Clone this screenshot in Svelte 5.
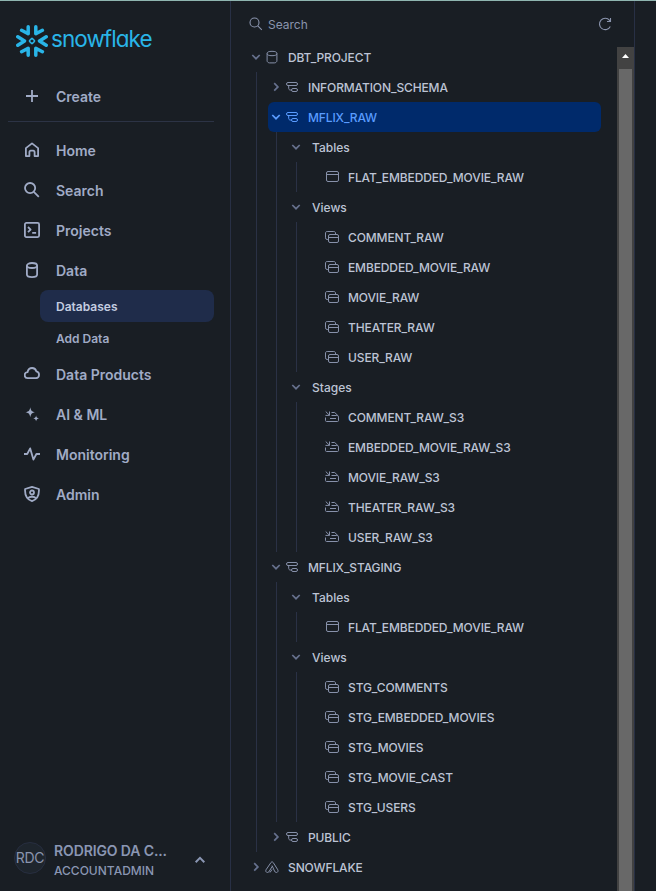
<script>
  const nav = [
    { label: 'Home', icon: 'home' },
    { label: 'Search', icon: 'search' },
    { label: 'Projects', icon: 'projects' },
    {
      label: 'Data',
      icon: 'data',
      children: [{ label: 'Databases', active: true }, { label: 'Add Data' }]
    },
    { label: 'Data Products', icon: 'cloud' },
    { label: 'AI & ML', icon: 'sparkle' },
    { label: 'Monitoring', icon: 'pulse' },
    { label: 'Admin', icon: 'shield' }
  ];

  const leaves = (icon, names) => names.map((label) => ({ label, icon, leaf: true }));

  const tree = [
    {
      label: 'DBT_PROJECT',
      icon: 'database',
      children: [
        { label: 'INFORMATION_SCHEMA', icon: 'schema' },
        {
          label: 'MFLIX_RAW',
          icon: 'schema',
          selected: true,
          children: [
            { label: 'Tables', children: leaves('table', ['FLAT_EMBEDDED_MOVIE_RAW']) },
            {
              label: 'Views',
              children: leaves('view', ['COMMENT_RAW', 'EMBEDDED_MOVIE_RAW', 'MOVIE_RAW', 'THEATER_RAW', 'USER_RAW'])
            },
            {
              label: 'Stages',
              children: leaves('stage', [
                'COMMENT_RAW_S3',
                'EMBEDDED_MOVIE_RAW_S3',
                'MOVIE_RAW_S3',
                'THEATER_RAW_S3',
                'USER_RAW_S3'
              ])
            }
          ]
        },
        {
          label: 'MFLIX_STAGING',
          icon: 'schema',
          children: [
            { label: 'Tables', children: leaves('table', ['FLAT_EMBEDDED_MOVIE_RAW']) },
            {
              label: 'Views',
              children: leaves('view', ['STG_COMMENTS', 'STG_EMBEDDED_MOVIES', 'STG_MOVIES', 'STG_MOVIE_CAST', 'STG_USERS'])
            }
          ]
        },
        { label: 'PUBLIC', icon: 'schema' }
      ]
    },
    { label: 'SNOWFLAKE', icon: 'app' }
  ];
</script>

{#snippet navIcon(name)}
  <svg class="nav-icon" viewBox="0 0 16 16">
    {#if name === 'plus'}
      <path d="M8 2v12M2 8h12" />
    {:else if name === 'home'}
      <path d="M1.9 6.1 8 1.4l6.1 4.7V14.1H10.6V10a1.3 1.3 0 0 0-1.3-1.3H6.7A1.3 1.3 0 0 0 5.4 10v4.1H1.9z" />
    {:else if name === 'search'}
      <circle cx="6.1" cy="6.1" r="5.1" /><path d="m9.8 9.8 5 5" />
    {:else if name === 'projects'}
      <rect x=".9" y=".9" width="14.2" height="14.2" rx="1.5" />
      <path d="m4 5 2.6 2.6L4 10.2M8.2 10.8h3.9" />
    {:else if name === 'data'}
      <ellipse cx="8" cy="3.5" rx="5.1" ry="2.5" />
      <path d="M2.9 3.5v9c0 1.6 1.7 2.6 5.1 2.6s5.1-1 5.1-2.6v-9" />
    {:else if name === 'cloud'}
      <path d="M3.9 12.2a3 3 0 0 1-.4-6C4 3.8 5.7 2 8.1 2c2.2 0 3.7 1.4 4.2 3.4a3.45 3.45 0 0 1-.3 6.8z" />
    {:else if name === 'sparkle'}
      <g transform="translate(0 1.2)">
        <path class="solid" d="M6.3 0c.7 3.4 1.2 4.2 4.7 5-3.5.8-4 1.6-4.7 5-.7-3.4-1.2-4.2-4.8-5 3.6-.8 4.1-1.6 4.800-5zM12.100 8.300c.4 2 .9 2.400 2.900 2.900-2 .4-2.500.9-2.900 2.900-.4-2-.9-2.500-2.900-2.900 2-.5 2.500-.9 2.900-2.900z" />
      </g>
    {:else if name === 'pulse'}
      <path d="M0 8h3.200L6.200 2.400l3.200 11.200L12.400 8H16" />
    {:else if name === 'shield'}
      <path d="M8 .9 14.900 3c.4 5.900-1.300 10.300-6.900 12.100C2.400 13.300.7 8.900 1.100 3z" />
      <circle cx="8" cy="6.500" r="2" />
      <path d="M3.900 12.400c1.700-2.200 6.500-2.200 8.200 0" />
    {/if}
  </svg>
{/snippet}

{#snippet treeIcon(name)}
  <svg class="tree-icon" viewBox="0 0 16 16">
    {#if name === 'database'}
      <ellipse cx="8" cy="4.5" rx="4.9" ry="2.2" />
      <path d="M3.1 4.5v7.3c0 1.1 1.2 2.1 2.5 2.1h4.800c1.300 0 2.500-1 2.500-2.100V4.500" />
    {:else if name === 'schema'}
      <rect x="2.500" y="3.500" width="11" height="3" rx="1.500" />
      <path d="M4.700 6.500v2.900c0 .9.600 1.600 1.500 1.600h1.300" />
      <rect x="7.500" y="9.500" width="6" height="3" rx="1.500" />
    {:else if name === 'table'}
      <rect x="2.500" y="2.500" width="12" height="10" rx="1.500" /><path d="M2.500 5.500h12" />
    {:else if name === 'view'}
      <rect x="4.500" y="5.500" width="10" height="8" rx="1.500" /><path d="M4.500 8.500h10" />
      <path d="M4.500 10.500H3.200a1.700 1.700 0 0 1-1.700-1.700V4c0-1 .7-1.500 1.700-1.500h6.600c.9 0 1.700.6 1.700 1.500v1.500" />
    {:else if name === 'stage'}
      <path d="m1.700 2.500 3.600 3.600M5.500 2.500v3.900H1.500" />
      <path d="M7.500 3.500h3.200l3.800 3.700M7.500 6.500h5.300c1 0 1.700.7 1.700 1.600v3.400c0 .6-.4 1-1 1h-11c-.6 0-1-.4-1-1V8.500M6 9.500h6" />
    {:else if name === 'app'}
      <path d="M7 3.500 2 10.800c-.6 1.200 0 2.700 1.500 2.700 1 0 1.600-.7 1.900-1.500L8.500 7M7 3.500c.5-.8 1.700-.8 2.200 0l4.600 7.300c.6 1.200 0 2.700-1.400 2.700-1 0-1.600-.7-1.900-1.500L8 6.500M8 10.500l-2 3" />
    {/if}
  </svg>
{/snippet}

{#snippet node(item)}
  <div class="row" class:selected={item.selected}>
    {#if !item.leaf}
      <svg class="chevron" viewBox="0 0 16 16">
        <path d={item.children ? 'm4.3 6 3.7 3.7L11.7 6' : 'm6.2 4.2 3.7 3.7-3.7 3.7'} />
      </svg>
    {:else}
      <span class="spacer"></span>
    {/if}
    {#if item.icon}{@render treeIcon(item.icon)}{/if}
    <span class="label" class:object={item.icon}>{item.label}</span>
  </div>
  {#if item.children}
    <div class="branch">
      {#each item.children as child}{@render node(child)}{/each}
    </div>
  {/if}
{/snippet}

<div class="app">
  <aside>
    <div class="brand">
      <svg class="mark" viewBox="0 0 32 32">
        <path d="M12.200 1.800v7L5.600 5.300M19.800 1.800v7l6.600-3.500M12.200 30.200v-7l-6.600 3.500M19.800 30.200v-7l6.600 3.500M1.800 11.800 8.500 16l-6.700 4.200M30.200 11.800 23.500 16l6.700 4.200" />
        <rect class="core" x="14" y="14" width="4" height="4" rx=".6" transform="rotate(45 16 16)" />
      </svg>
      <span class="wordmark">snowflake</span>
    </div>

    <div class="item create">{@render navIcon('plus')}<span>Create</span></div>
    <hr />
    <nav>
      {#each nav as entry}
        <div class="item">{@render navIcon(entry.icon)}<span>{entry.label}</span></div>
        {#if entry.children}
          <div class="subnav">
            {#each entry.children as sub}
              <div class="sub" class:active={sub.active}>{sub.label}</div>
            {/each}
          </div>
        {/if}
      {/each}
    </nav>

    <div class="user">
      <div class="avatar">RDC</div>
      <div class="who">
        <div class="name">RODRIGO DA C...</div>
        <div class="role">ACCOUNTADMIN</div>
      </div>
      <svg class="caret" viewBox="0 0 16 16"><path d="m3.700 10.200 4.300-4.300 4.300 4.300" /></svg>
    </div>
  </aside>

  <main>
    <header>
      <svg class="find" viewBox="0 0 14 14"><circle cx="5.500" cy="5.500" r="4.500" /><path d="m8.800 8.800 4 4" /></svg>
      <span>Search</span>
      <svg class="refresh" viewBox="0 0 14 14">
        <path d="M12.300 9.500A5.700 5.700 0 1 1 11.600 3.300L12.500 4.300M12.500 1v3.500H9" />
      </svg>
    </header>
    <div class="scroller">
      <div class="tree">
        {#each tree as item}{@render node(item)}{/each}
      </div>
      <div class="scrollbar">
        <div class="up"></div>
        <div class="thumb"></div>
      </div>
    </div>
  </main>
</div>

<style>
  :global(body) {
    background: #191e24;
  }
  .app {
    box-sizing: border-box;
    width: 656px;
    height: 891px;
    display: flex;
    overflow: hidden;
    background: #191e24;
    border-top: 1px solid #8fb5b0;
    font-family: Inter, 'Liberation Sans', sans-serif;
    color: #bdc4d5;
  }
  svg {
    flex: none;
    fill: none;
    stroke: currentColor;
  }
  aside {
    width: 230px;
    display: flex;
    flex-direction: column;
    color: #a0abc6;
  }
  .brand {
    display: flex;
    align-items: center;
    height: 32px;
    margin: 24px 0 0 16px;
    color: #29b5e8;
  }
  .mark {
    width: 32px;
    height: 32px;
    stroke-width: 3.5;
    stroke-linecap: round;
    stroke-linejoin: round;
  }
  .mark .core {
    stroke-width: 1.5;
  }
  .wordmark {
    margin: -4px 0 0 3px;
    font-size: 22.5px;
    line-height: 30px;
    font-weight: 400;
    letter-spacing: -0.95px;
    font-feature-settings: 'cv11';
  }
  .item {
    display: flex;
    align-items: center;
    height: 40px;
    padding-left: 24px;
    gap: 16px;
    font-size: 14px;
    font-weight: 600;
  }
  .item span {
    padding-top: 2px;
    line-height: 20px;
  }
  .create {
    margin-top: 19px;
  }
  .nav-icon {
    width: 16px;
    height: 16px;
    stroke-width: 1.8;
    stroke-linejoin: round;
  }
  .nav-icon .solid {
    fill: currentColor;
    stroke: none;
  }
  hr {
    width: 206px;
    height: 1px;
    margin: 5px 0 8px 8px;
    border: 0;
    background: #2c3345;
  }
  .subnav {
    margin: 0 16px 0 40px;
    font-size: 12px;
    font-weight: 600;
  }
  .sub {
    height: 32px;
    line-height: 33px;
    padding-left: 16px;
    border-radius: 8px;
  }
  .active {
    background: #1f2c4a;
    color: #c3cce0;
  }
  .user {
    display: flex;
    align-items: center;
    margin: auto 0 13px 14px;
    height: 40px;
    color: #8a96b3;
  }
  .avatar {
    box-sizing: border-box;
    width: 32px;
    height: 32px;
    display: flex;
    justify-content: center;
    align-items: center;
    border: 1px solid #272e40;
    border-radius: 50%;
    background: #1e252d;
    font-size: 14px;
    line-height: 18px;
    padding-bottom: 1px;
    letter-spacing: -0.2px;
    color: #8a94ad;
  }
  .who {
    width: 138px;
    margin: 4px 0 0 8px;
  }
  .name {
    font-size: 14px;
    font-weight: 600;
    line-height: 20px;
    letter-spacing: -0.12px;
  }
  .role {
    font-size: 12px;
    font-weight: 500;
    line-height: 19px;
  }
  .caret {
    width: 16px;
    height: 16px;
    margin-top: 3px;
    stroke-width: 2;
  }
  main {
    box-sizing: border-box;
    width: 405px;
    display: flex;
    flex-direction: column;
    border: solid #283045;
    border-width: 0 1px;
  }
  header {
    display: flex;
    align-items: center;
    height: 46px;
    flex: none;
    padding: 0 22px 0 18px;
    box-sizing: border-box;
    font-size: 12px;
    color: #8a94ad;
  }
  header span {
    margin: 1px auto 0 5px;
  }
  .find,
  .refresh {
    width: 14px;
    height: 14px;
    stroke-width: 1.1;
  }
  .scroller {
    flex: 1;
    min-height: 0;
    display: flex;
    justify-content: space-between;
  }
  .tree {
    width: 353px;
    margin: -5px 0 0 17px;
  }
  .branch {
    margin-left: 8px;
    padding-left: 11px;
    border-left: 1px solid #2a3145;
  }
  .row {
    display: flex;
    align-items: center;
    height: 30px;
    border-radius: 6px;
  }
  .selected {
    background: #002a6b;
    color: #5a9cff;
  }
  .chevron,
  .spacer,
  .tree-icon {
    width: 16px;
    height: 16px;
  }
  .chevron {
    stroke-width: 1.7;
    color: #66718e;
  }
  .tree-icon {
    stroke-width: 1;
    color: #8791aa;
  }
  .selected svg {
    color: #5a9cff;
  }
  .label {
    margin-left: 8px;
    padding-top: 1px;
    font-size: 12px;
    font-weight: 500;
    line-height: 18px;
    white-space: nowrap;
  }
  .object {
    letter-spacing: -0.12px;
  }
  .scrollbar {
    width: 17px;
    display: flex;
    flex-direction: column;
    background: #424242;
  }
  .up {
    height: 22px;
    box-sizing: border-box;
    padding: 7px 0 0 5px;
  }
  .up::before {
    content: '';
    display: block;
    width: 7px;
    height: 4px;
    background: #fff;
    clip-path: polygon(50% 0, 100% 100%, 0 100%);
  }
  .thumb {
    flex: 1;
    margin: 0 2px;
    background: #686868;
  }
</style>
